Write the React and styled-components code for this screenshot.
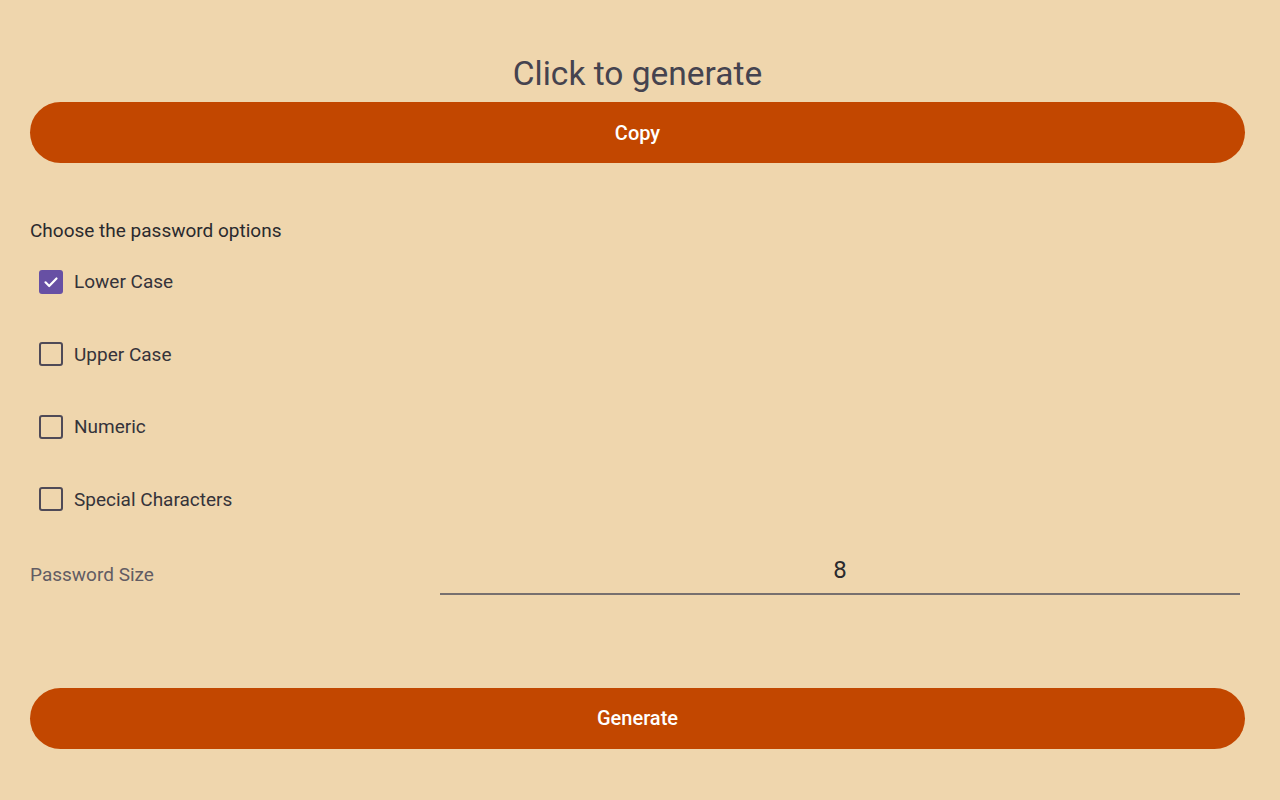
import React, { useState } from 'react';
import styled, { createGlobalStyle } from 'styled-components';

const GlobalStyle = createGlobalStyle`
  html, body {
    margin: 0;
    padding: 0;
    background: #efd6ad;
    font-family: Roboto, "Liberation Sans", sans-serif;
  }
`;

const Page = styled.div`
  width: 1280px;
  height: 800px;
  box-sizing: border-box;
  padding: 52px 35px 0 30px;
  display: flex;
  flex-direction: column;
`;

const Title = styled.h1`
  margin: 0;
  height: 50px;
  line-height: 44px;
  text-align: center;
  font-size: 33.5px;
  font-weight: 400;
  color: #45434f;
`;

const PillButton = styled.button`
  height: 61px;
  width: 100%;
  flex-shrink: 0;
  border: none;
  border-radius: 31px;
  background: #c24700;
  color: #ffffff;
  font-family: Roboto, "Liberation Sans", sans-serif;
  font-size: 20px;
  font-weight: 500;
  cursor: pointer;
  margin-top: ${p => p.$top || 0}px;
`;

const Heading = styled.p`
  margin: 56px 0 0;
  font-size: 19px;
  line-height: 24px;
  color: #2a2a2e;
`;

const Options = styled.div`
  display: flex;
  flex-direction: column;
  margin-top: 26px;
  gap: 47.5px;
`;

const OptionRow = styled.label`
  display: flex;
  align-items: center;
  height: 25px;
  gap: 11px;
  padding-left: 9px;
  font-size: 19px;
  color: #35333a;
  cursor: pointer;
`;

const Box = styled.span`
  width: 24px;
  height: 24px;
  box-sizing: border-box;
  border-radius: 3px;
  border: ${p => (p.$checked ? 'none' : '2.5px solid #4f4a57')};
  background: ${p => (p.$checked ? '#6750a4' : 'transparent')};
  display: flex;
  align-items: center;
  justify-content: center;
`;

const SizeRow = styled.div`
  display: flex;
  align-items: flex-end;
  margin-top: 37px;
  margin-right: 5px;
`;

const SizeLabel = styled.span`
  width: 410px;
  font-size: 19px;
  line-height: 24px;
  padding-bottom: 8px;
  color: #625c63;
`;

const SizeInput = styled.input`
  flex: 1;
  height: 46px;
  box-sizing: border-box;
  border: none;
  border-bottom: 2px solid #77706f;
  background: transparent;
  text-align: center;
  font-family: Roboto, "Liberation Sans", sans-serif;
  font-size: 24px;
  color: #2a2a2e;
  padding: 0 0 2px;
  outline: none;
`;

const options = ['Lower Case', 'Upper Case', 'Numeric', 'Special Characters'];

function Check() {
  return (
    <svg width="16" height="16" viewBox="0 0 16 16">
      <path d="M2.5 8.3 L6.2 12 L13.5 4.5" fill="none" stroke="#fff" strokeWidth="2.2" strokeLinecap="round" strokeLinejoin="round" />
    </svg>
  );
}

export default function App() {
  let [checked, checkedModify] = useState([true, false, false, false]);
  let [size, sizeModify] = useState('8');

  return (
    <Page>
      <GlobalStyle />
      <Title>Click to generate</Title>
      <PillButton>Copy</PillButton>

      <Heading>Choose the password options</Heading>
      <Options>
        {options.map((name, i) => (
          <OptionRow key={name} onClick={(e) => {
            e.preventDefault();
            let copy = [...checked];
            copy[i] = !copy[i];
            checkedModify(copy);
          }}>
            <Box $checked={checked[i]}>{checked[i] ? <Check /> : null}</Box>
            {name}
          </OptionRow>
        ))}
      </Options>

      <SizeRow>
        <SizeLabel>Password Size</SizeLabel>
        <SizeInput value={size} onChange={(e) => { sizeModify(e.target.value) }} />
      </SizeRow>

      <PillButton $top={93}>Generate</PillButton>
    </Page>
  );
}
